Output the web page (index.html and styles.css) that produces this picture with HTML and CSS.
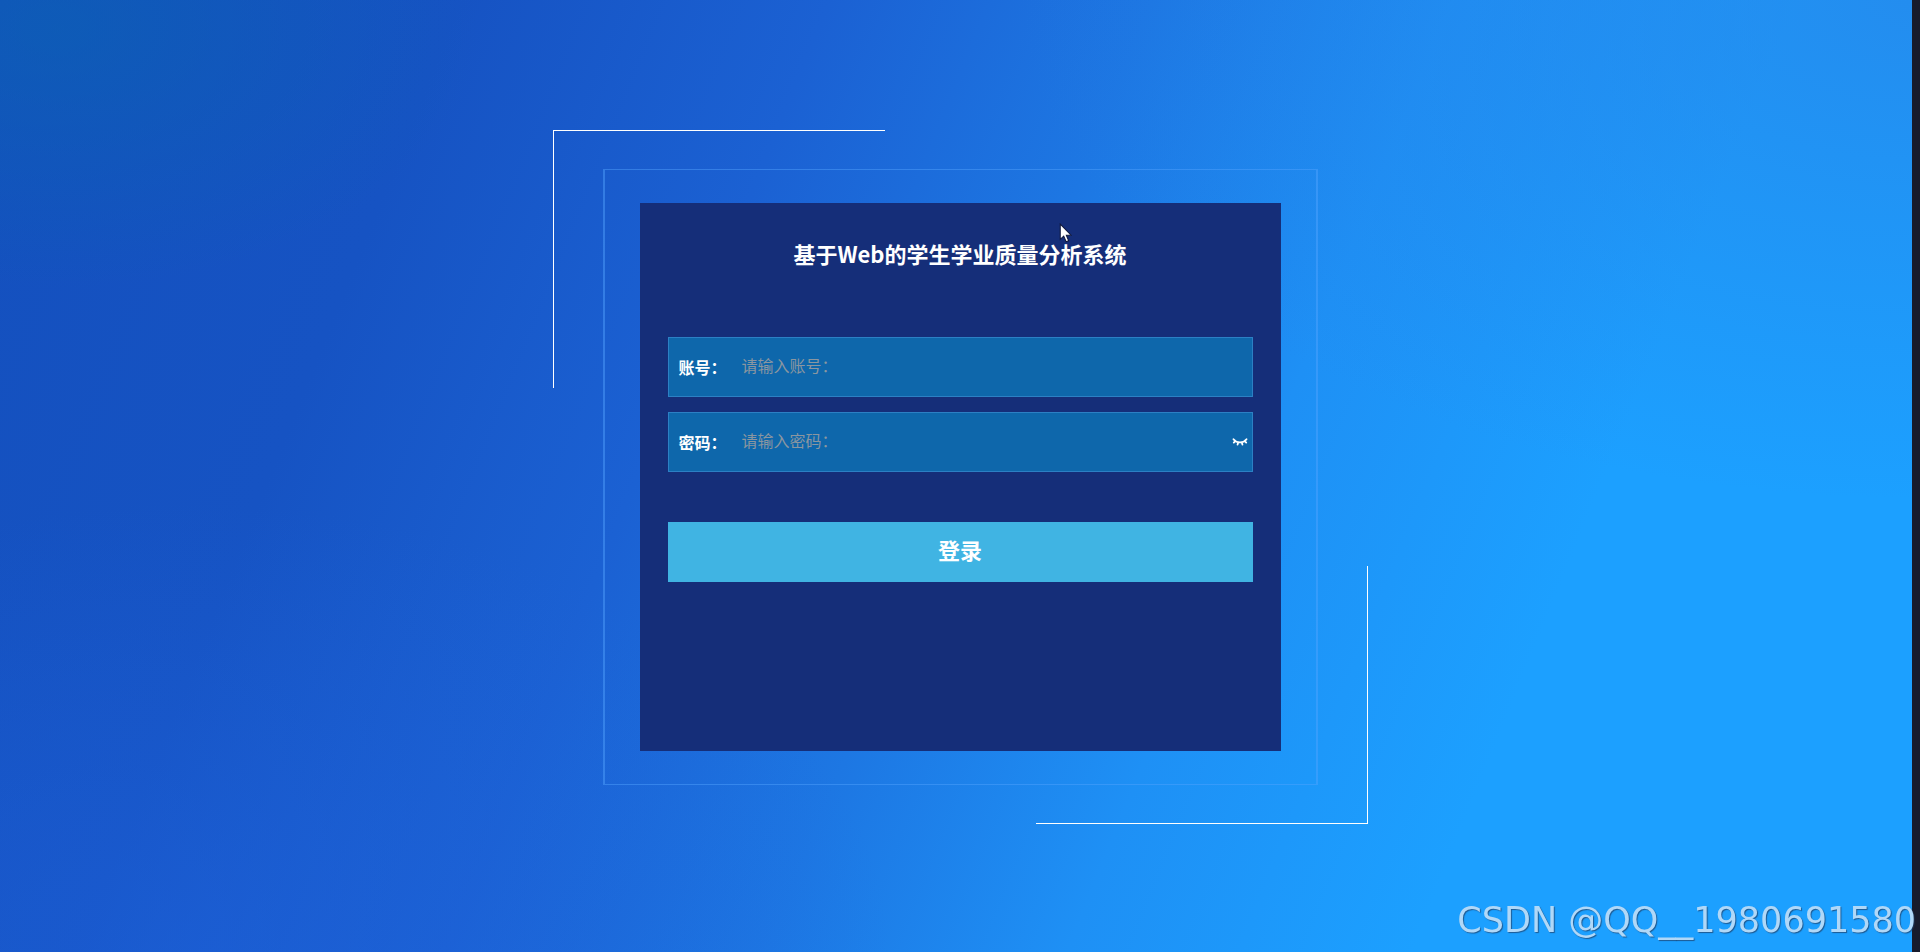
FILE: index.html
```
<!DOCTYPE html>
<html lang="zh-CN">
<head>
<meta charset="utf-8">
<meta name="viewport" content="width=device-width, initial-scale=1">
<title>基于Web的学生学业质量分析系统</title>
<link rel="stylesheet" href="styles.css">
</head>

<body>
<main class="login">
	<div class="outer">
		<div class="frame">
			<form class="card" action="#" method="post">
				<h1>基于Web的学生学业质量分析系统</h1>

				<div class="field">
					<label for="username">账号：</label>
					<input type="text" id="username" name="username" placeholder="请输入账号：">
				</div>

				<div class="field">
					<label for="password">密码：</label>
					<input type="password" id="password" name="password" placeholder="请输入密码：">
					<button type="button" class="eye" aria-label="显示密码">
						<svg viewBox="0 0 16 8" width="16" height="8" fill="none" stroke="currentColor" stroke-width="1.8" stroke-linecap="round">
							<path d="M1.500 1.200C4.500 5.400 11.500 5.400 14.500 1.200M3.200 3.200L1.800 4.600M6.200 4.600L5.600 6.600M9.800 4.600L10.400 6.600M12.800 3.200L14.200 4.600"/>
						</svg>
					</button>
				</div>

				<button type="submit" class="submit">登录</button>
			</form>
		</div>
	</div>
</main>

<div class="edge"></div>
<div class="watermark">CSDN @QQ__1980691580</div>

<svg class="cursor" viewBox="0 0 12 19" width="13" height="20">
	<path d="M1 1V15.500L4.300 12.500L6.600 17.800L9 16.800L6.800 11.600H11.300Z" fill="#fff" stroke="#10183c" stroke-width="1"/>
</svg>
</body>
</html>
```
FILE: styles.css
```
* {box-sizing: border-box;}
body {
	margin: 0;
	font-family: "Noto Sans CJK SC", sans-serif;
	font-size: 16px;
	color: #fff;
}

.login {
	display: flex;
	justify-content: center;
	align-items: center;
	min-height: 100vh;
	padding-top: 2px;
	background:
		radial-gradient(ellipse 420px 260px at 3% 3%, rgba(10,98,178,.6), rgba(10,98,178,0)),
		radial-gradient(ellipse 900px 500px at 100% 0, rgba(40,128,228,.6), rgba(40,128,228,0)),
		radial-gradient(ellipse 700px 450px at 10% 100%, rgba(30,98,220,.5), rgba(30,98,220,0)),
		linear-gradient(112deg, #1450be 0%, #1653c3 20%, #1b61d3 36%, #1d77e3 50%, #1e90f5 63%, #1ca0ff 78%, #1ca0ff 100%);
}

/* white corner lines */
.outer {
	padding: 39px 50px;
	background:
		linear-gradient(#fff, #fff) left top / 332px 1px,
		linear-gradient(#fff, #fff) left top / 1px 258px,
		linear-gradient(#fff, #fff) right bottom / 332px 1px,
		linear-gradient(#fff, #fff) right bottom / 1px 258px;
	background-repeat: no-repeat;
}
.frame {
	padding: 33px 35px;
	border: 1px solid rgba(84,164,255,.45);
	border-width: 1px 2px;
}
.card {
	display: flex;
	flex-direction: column;
	width: 641px;
	max-width: 100%;
	min-height: 548px;
	padding: 33px 28px;
	background: #152e79;
}

h1 {
	margin: 0 0 67px;
	font-size: 22px;
	font-weight: 700;
	line-height: 34px;
	text-align: center;
}

.field {
	display: flex;
	align-items: center;
	height: 60px;
	margin-bottom: 15px;
	padding-left: 10px;
	border: 1px solid #2c80c4;
	background: #0e67ab;
}
.field label {font-weight: 700;}
.field input {
	flex: 1;
	min-width: 0;
	height: 54px;
	margin-bottom: 4px;
	padding: 0 15px;
	border: 0;
	outline: 0;
	background: none;
	font: inherit;
	color: #fff;
}
.field input::placeholder {color: #8a96a0;}

.eye {
	display: flex;
	padding: 0 4px;
	border: 0;
	background: none;
	color: #fff;
	cursor: pointer;
}

.submit {
	height: 60px;
	margin-top: 35px;
	padding: 0 0 6px;
	border: 0;
	background: #40b4e3;
	font: inherit;
	font-size: 22px;
	font-weight: 700;
	color: #fff;
	cursor: pointer;
}

.edge {
	position: fixed;
	top: 0;
	right: 0;
	bottom: 0;
	width: 8px;
	background: #171b2c;
}
.watermark {
	position: fixed;
	right: 4px;
	bottom: 11px;
	font-family: "DejaVu Sans", sans-serif;
	font-size: 35px;
	line-height: 42px;
	color: #b0d8f8;
	text-shadow: 1px 1px 1px rgba(30,60,100,.7);
}
.cursor {
	position: absolute;
	top: 223px;
	left: 1059px;
}
```
